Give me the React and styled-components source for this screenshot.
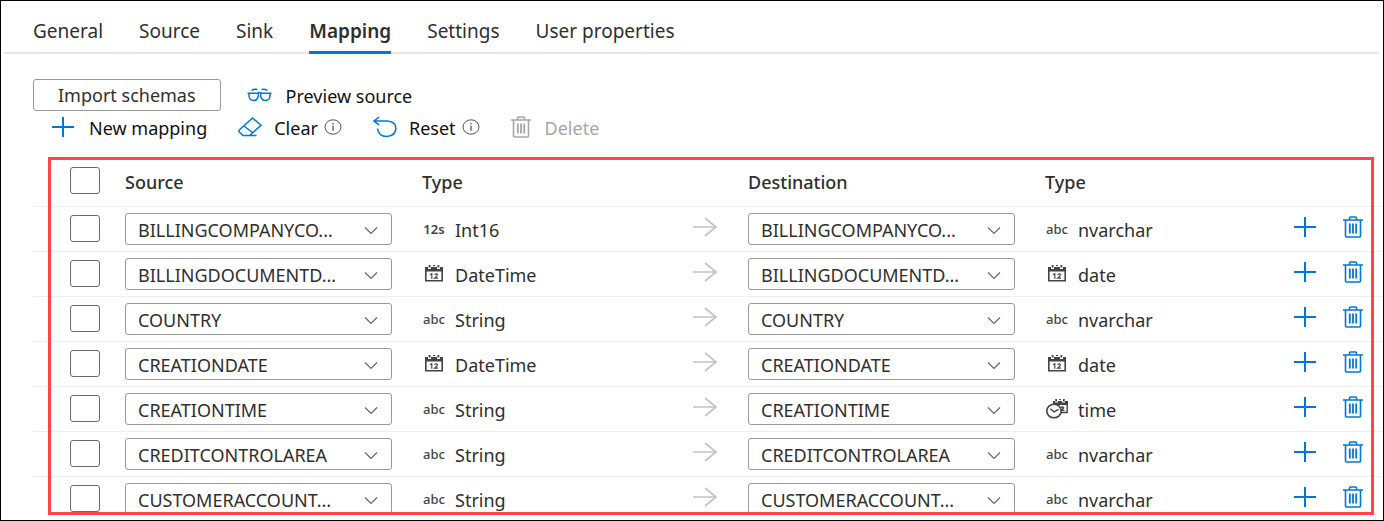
import React from "react";
import styled, { createGlobalStyle } from "styled-components";

const GlobalStyle = createGlobalStyle`
  * { box-sizing: border-box; }
  body { margin: 0; background: #fff; color: #2f2f2f; font-family: "Noto Sans", "Open Sans", sans-serif; font-size: 18px; line-height: 24px; }
  button, select, input { font: inherit; color: inherit; margin: 0; }
  svg { display: block; flex: none; }
`;

const Frame = styled.main`
  border: 1px solid #000;
  height: 100vh;
  overflow: hidden;
`;

const Tabs = styled.nav`
  display: flex;
  gap: 36px;
  margin: 0 4px 0 3px;
  padding: 14px 0 0 29px;
  border-bottom: 2px solid #e6e6e6;
`;

const Tab = styled.button`
  border: 0;
  background: none;
  padding: 3px 0 7px;
  margin-bottom: -2px;
  font-size: 19px;
  font-weight: ${(p) => (p.$active ? 600 : 400)};
  line-height: 26px;
  border-bottom: 3px solid ${(p) => (p.$active ? "#0078d4" : "transparent")};
`;

const Actions = styled.div`
  display: flex;
  align-items: center;
  gap: 26px;
  padding: 25px 32px 0;
`;

const OutlineButton = styled.button`
  height: 32px;
  padding: 1px 24px 1px;
  border: 1px solid #9a9a9a;
  border-radius: 3px;
  background: #fff;
  line-height: 28px;
`;

const CommandBar = styled.div`
  display: flex;
  align-items: center;
  gap: 31px;
  height: 32px;
  padding-left: 50px;
`;

const CommandGroup = styled.div`
  display: flex;
  align-items: center;
  gap: 6px;
`;

const Command = styled.button`
  display: flex;
  align-items: center;
  gap: ${(p) => p.$gap || 14}px;
  padding: 0;
  border: 0;
  background: none;
  color: #111;
  &:disabled { color: #a6a6a6; }
`;

const CommandText = styled.span`
  padding-top: 2px;
`;

const InfoButton = styled.button`
  padding: 0;
  border: 0;
  background: none;
`;

const MappingRegion = styled.section`
  position: relative;
  margin: 14px 0 0 32px;
`;

const Highlight = styled.div`
  position: absolute;
  inset: 0 9px 6px 15px;
  border: 3px solid #ff4545;
  pointer-events: none;
`;

const Table = styled.table`
  width: 100%;
  table-layout: fixed;
  border-collapse: collapse;
`;

const Row = styled.tr`
  height: ${(p) => (p.$head ? 49 : 45)}px;
  border-bottom: 1px solid #efefef;
  &:last-child { border-bottom: ${(p) => (p.$head ? "1px solid #efefef" : "0")}; }
`;

const Head = styled.th`
  padding: 2px 0 0;
  text-align: left;
  font-weight: 500;
`;

const Cell = styled.td`
  padding: ${(p) => (p.$raised ? "0 0 3px" : "0")};
`;

const CheckCell = styled.td`
  padding: 0 0 1px 37px;
`;

const Checkbox = styled.input`
  appearance: none;
  display: block;
  width: 30px;
  height: 27px;
  border: 1px solid #6a6a6a;
  border-radius: 3px;
  background: #fff;
`;

const SelectBox = styled.div`
  position: relative;
  width: 267px;
`;

const Select = styled.select`
  appearance: none;
  display: block;
  width: 100%;
  height: 32px;
  padding: 3px 40px 0 12px;
  border: 1px solid #9a9a9a;
  border-radius: 3px;
  background: #fff;
  line-height: 27px;
`;

const Chevron = styled.svg`
  position: absolute;
  right: 14px;
  top: 13px;
  pointer-events: none;
`;

const TypeLabel = styled.div`
  display: flex;
  align-items: center;
  gap: 10px;
  padding-left: 1px;
`;

const TypeText = styled.span`
  padding-top: 2px;
`;

const TypeIcon = styled.span`
  display: flex;
  width: 22px;
  justify-content: center;
  font-size: 13px;
  font-weight: ${(p) => (p.$strong ? 600 : 500)};
  line-height: 20px;
  color: #444;
`;

const IconButton = styled.button`
  display: block;
  padding: 0;
  border: 0;
  background: none;
  color: #0078d4;
`;

const Plus = () => (
  <svg width="24" height="22" viewBox="0 0 24 22" fill="none" stroke="#0078d4" strokeWidth="2">
    <path d="M1 11H23M12 1V21" />
  </svg>
);

const Trash = ({ color = "#0078d4" }) => (
  <svg width="20" height="22" viewBox="0 0 20 22" fill="none" stroke={color} strokeWidth="1.6">
    <path d="M0 4H20M6.5 4V2Q6.5 1 7.5 1H12.5Q13.5 1 13.5 2V4M2.5 4V20Q2.5 21 3.5 21H16.5Q17.5 21 17.5 20V4" />
    <path d="M6.8 7.5V17.5M10 7.5V17.5M13.2 7.5V17.5" strokeWidth="1.8" />
  </svg>
);

const Glasses = () => (
  <svg width="25" height="14" viewBox="0 0 24 14" fill="none" stroke="#0078d4" strokeWidth="1.5">
    <path d="M0 5.3H10Q12 3.8 14 5.3H24M4 2.5Q6 .8 10 1.4M20 2.5Q18 .8 14 1.4" />
    <path d="M1.5 5V8Q2 12.5 6 12.5T10.8 8V5M13.2 5V8Q14 12.5 18 12.5T22.5 8V5" />
  </svg>
);

const Eraser = () => (
  <svg width="24" height="20" viewBox="0 0 24 20" fill="none" stroke="#0078d4" strokeWidth="1.5">
    <path d="M14.5 1L23 8.3L11.5 18.5H5L1 14.8Q.5 14 1.3 13L14.5 1ZM6 9L15 16M5 18.5H18.5" />
  </svg>
);

const Undo = () => (
  <svg width="24" height="22" viewBox="0 0 24 22" fill="none" stroke="#0078d4" strokeWidth="1.6">
    <path d="M6 1L1 5L6 9M1 5H14Q22.8 5.5 22.8 12.5T14 20.5Q5.5 20.5 4.5 12.5" />
  </svg>
);

const Info = () => (
  <svg width="18" height="16" viewBox="0 0 18 16" fill="none" stroke="#555">
    <ellipse cx="9" cy="8" rx="8" ry="7.2" />
    <path d="M9 6.8V11.8M9 4V5.4" strokeWidth="1.3" />
  </svg>
);

const Arrow = () => (
  <svg width="26" height="20" viewBox="0 0 26 20" fill="none" stroke="#c4c4c4" strokeWidth="1.7">
    <path d="M1 10H24M13 1L24 10L13 19" />
  </svg>
);

const Calendar = () => (
  <svg width="20" height="17" viewBox="0 0 20 17" fill="none">
    <path d="M1.8 2V15.8H18.2V2" stroke="#444" strokeWidth="1.6" />
    <path d="M1 2H4V4H7V2H13V4H16V2H19V6.5H1Z" fill="#444" />
    <path d="M4.7 0H6.5V2.5H4.7ZM13.5 0H15.3V2.5H13.5ZM9 0H11V1H9Z" fill="#444" />
    <path d="M6 9.8L7.8 8.8V13.8M10.4 9.6Q13.4 7.8 13.4 10Q13.4 11 10.6 13.2H14" stroke="#444" strokeWidth="1.2" />
  </svg>
);

const Clock = () => (
  <svg width="23" height="20" viewBox="0 0 23 20" fill="none">
    <path d="M7 2H9V3.5H12V2H16V3.5H19V2H22V6H7Z" fill="#444" />
    <path d="M9.3 0H11V2.5H9.3ZM17 0H18.7V2.5H17ZM13.2 0H15V1H13.2Z" fill="#444" />
    <path d="M21.2 3V13.5H14M15 8.2Q18 7.5 17.5 9.2L15.5 11.4H18.5" stroke="#444" strokeWidth="1.4" />
    <ellipse cx="8" cy="12" rx="7.2" ry="6.8" fill="#fff" stroke="#444" strokeWidth="1.6" />
    <path d="M4.3 9.8L8 12.8L12.5 10.3" stroke="#444" strokeWidth="1.4" />
  </svg>
);

const glyphs = { text: "abc", number: "12s", date: <Calendar />, time: <Clock /> };

const tabs = ["General", "Source", "Sink", "Mapping", "Settings", "User properties"];

const rows = [
  ["BILLINGCOMPANYCO...", "number", "Int16", "text", "nvarchar"],
  ["BILLINGDOCUMENTD...", "date", "DateTime", "date", "date"],
  ["COUNTRY", "text", "String", "text", "nvarchar"],
  ["CREATIONDATE", "date", "DateTime", "date", "date"],
  ["CREATIONTIME", "text", "String", "time", "time"],
  ["CREDITCONTROLAREA", "text", "String", "text", "nvarchar"],
  ["CUSTOMERACCOUNT...", "text", "String", "text", "nvarchar"],
];

const ColumnSelect = ({ value, label }) => (
  <SelectBox>
    <Select aria-label={label} defaultValue={value}>
      <option>{value}</option>
    </Select>
    <Chevron width="14" height="9" viewBox="0 0 14 9" fill="none" stroke="#666" strokeWidth="1.2">
      <path d="M1 1.5L7 7.5L13 1.5" />
    </Chevron>
  </SelectBox>
);

const Type = ({ kind, name }) => (
  <TypeLabel>
    <TypeIcon $strong={kind === "number"}>{glyphs[kind]}</TypeIcon>
    <TypeText>{name}</TypeText>
  </TypeLabel>
);

export default function App() {
  return (
    <Frame>
      <GlobalStyle />
      <Tabs>
        {tabs.map((name) => (
          <Tab key={name} $active={name === "Mapping"}>{name}</Tab>
        ))}
      </Tabs>
      <Actions>
        <OutlineButton>Import schemas</OutlineButton>
        <Command><Glasses /><CommandText>Preview source</CommandText></Command>
      </Actions>
      <CommandBar>
        <Command><Plus /><CommandText>New mapping</CommandText></Command>
        <CommandGroup>
          <Command $gap={12}><Eraser /><CommandText>Clear</CommandText></Command>
          <InfoButton aria-label="About clear"><Info /></InfoButton>
        </CommandGroup>
        <CommandGroup>
          <Command $gap={12}><Undo /><CommandText>Reset</CommandText></Command>
          <InfoButton aria-label="About reset"><Info /></InfoButton>
        </CommandGroup>
        <Command disabled><Trash color="#a6a6a6" /><CommandText>Delete</CommandText></Command>
      </CommandBar>
      <MappingRegion>
        <Table>
          <colgroup>
            <col width="92" />
            <col width="297" />
            <col width="20%" />
            <col width="56" />
            <col width="297" />
            <col />
            <col width="50" />
            <col width="40" />
          </colgroup>
          <thead>
            <Row $head>
              <CheckCell><Checkbox type="checkbox" aria-label="Select all mappings" /></CheckCell>
              <Head>Source</Head>
              <Head>Type</Head>
              <td />
              <Head>Destination</Head>
              <Head>Type</Head>
              <td />
              <td />
            </Row>
          </thead>
          <tbody>
            {rows.map(([column, sourceKind, sourceType, sinkKind, sinkType]) => (
              <Row key={column}>
                <CheckCell><Checkbox type="checkbox" aria-label={`Select ${column}`} /></CheckCell>
                <Cell><ColumnSelect value={column} label="Source column" /></Cell>
                <Cell><Type kind={sourceKind} name={sourceType} /></Cell>
                <Cell $raised><Arrow /></Cell>
                <Cell><ColumnSelect value={column} label="Destination column" /></Cell>
                <Cell><Type kind={sinkKind} name={sinkType} /></Cell>
                <Cell $raised><IconButton aria-label="Add mapping"><Plus /></IconButton></Cell>
                <Cell $raised><IconButton aria-label="Delete mapping"><Trash /></IconButton></Cell>
              </Row>
            ))}
          </tbody>
        </Table>
        <Highlight />
      </MappingRegion>
    </Frame>
  );
}
